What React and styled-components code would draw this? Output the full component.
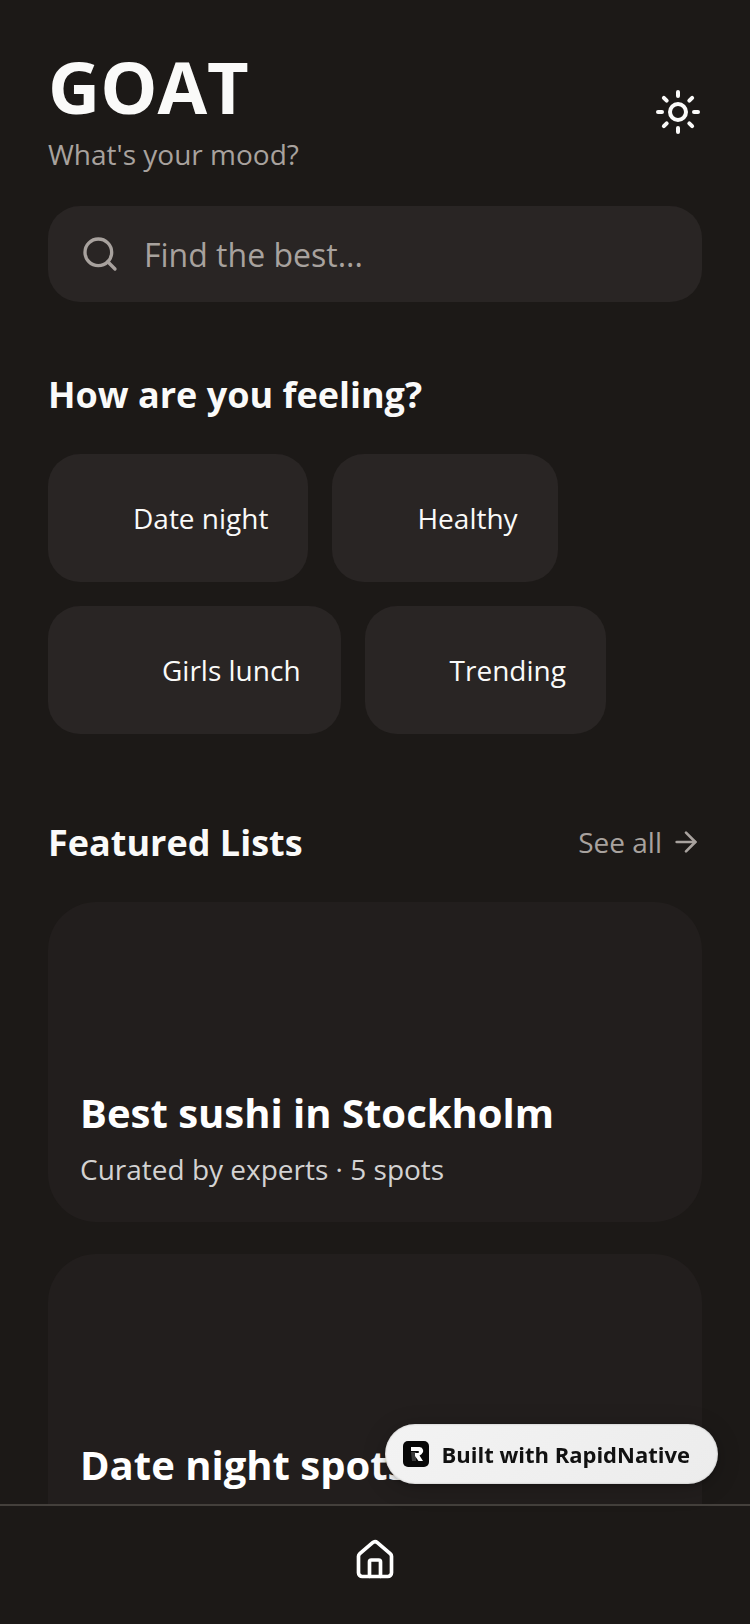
import React, { useState } from "react";
import styled, { createGlobalStyle } from "styled-components";
import { ArrowRight, House, Search, Sun } from "lucide-react";

const GlobalStyle = createGlobalStyle`
  * {
    box-sizing: border-box;
  }
  body {
    margin: 0;
    background-color: #1c1917;
    font-family: "Open Sans", "Noto Sans", sans-serif;
  }
  button, input {
    font-family: inherit;
    border: none;
    padding: 0;
  }
`;

const Screen = styled.div`
  display: flex;
  flex-direction: column;
  height: 100vh;
  background-color: #1c1917;
  color: #fafaf9;
`;

const Content = styled.main`
  flex: 1;
  min-height: 0;
  overflow: hidden;
  padding: 50px 48px 0;
`;

const Header = styled.header`
  display: flex;
  justify-content: space-between;
  align-items: center;
  margin-bottom: 32px;
`;

const Title = styled.h1`
  margin: 0 0 12px;
  font-size: 72px;
  line-height: 72px;
  font-weight: 700;
`;

const Subtitle = styled.p`
  margin: 0;
  font-size: 28px;
  line-height: 40px;
  color: #a8a29e;
`;

const ThemeButton = styled.button`
  display: flex;
  background: none;
  color: #fafaf9;
  cursor: pointer;
`;

const SearchBar = styled.label`
  display: flex;
  align-items: center;
  gap: 24px;
  height: 96px;
  padding: 0 32px;
  border-radius: 32px;
  background-color: #292524;
  color: #a8a29e;
`;

const SearchInput = styled.input`
  flex: 1;
  min-width: 0;
  height: 48px;
  background: none;
  outline: none;
  font-size: 32px;
  color: #fafaf9;

  &::placeholder {
    color: #a8a29e;
    opacity: 1;
  }
`;

const Section = styled.section`
  padding-top: ${(props) => props.$space};
`;

const SectionHead = styled.div`
  display: flex;
  justify-content: space-between;
  align-items: center;
  margin-bottom: 32px;
`;

const SectionTitle = styled.h2`
  margin: 0;
  padding-top: 2px;
  font-size: 36px;
  line-height: 54px;
  font-weight: 700;
`;

const SeeAll = styled.a`
  display: flex;
  align-items: center;
  gap: 8px;
  font-size: 28px;
  line-height: 40px;
  color: #a8a29e;
  text-decoration: none;
`;

const Moods = styled.div`
  display: flex;
  flex-wrap: wrap;
  gap: 24px;
`;

const Mood = styled.button`
  display: flex;
  align-items: center;
  gap: 16px;
  padding: 40px;
  border-radius: 32px;
  background-color: #292524;
  color: #fafaf9;
  font-size: 28px;
  line-height: 48px;
  cursor: pointer;
`;

const MoodIcon = styled.span`
  width: ${(props) => (props.$wide ? "58px" : "29px")};
`;

const Cards = styled.div`
  display: flex;
  flex-direction: column;
  gap: 32px;
`;

const Card = styled.article`
  display: flex;
  flex-direction: column;
  justify-content: flex-end;
  gap: 8px;
  height: 320px;
  padding: 33px 32px;
  border-radius: 48px;
  background-color: #221e1d;
`;

const CardTitle = styled.h3`
  margin: 0;
  font-size: 40px;
  line-height: 56px;
  font-weight: 700;
  color: #ffffff;
`;

const CardText = styled.p`
  margin: 0;
  font-size: 28px;
  line-height: 40px;
  color: #d3d2d2;
`;

const TabBar = styled.nav`
  display: flex;
  justify-content: center;
  padding: 32px 0 42px;
  border-top: 2px solid #44403c;
`;

const Tab = styled.a`
  display: flex;
  color: #ffffff;
`;

const Badge = styled.a`
  position: fixed;
  right: 32px;
  bottom: 140px;
  display: flex;
  align-items: center;
  gap: 12px;
  height: 60px;
  padding: 0 28px 0 18px;
  border-radius: 30px;
  background: linear-gradient(135deg, #f3f3f3, #ececec);
  box-shadow: inset 0 0 2px rgba(0, 0, 0, 0.3), 0 2px 4px rgba(0, 0, 0, 0.2),
    0 4px 24px rgba(0, 0, 0, 0.2);
  color: #111111;
  font-size: 22px;
  line-height: 32px;
  font-weight: 700;
  text-decoration: none;
`;

const moods = [
  { name: "Date night" },
  { name: "Healthy" },
  { name: "Girls lunch", wide: true },
  { name: "Trending" },
];

const lists = [
  { title: "Best sushi in Stockholm", text: "Curated by experts · 5 spots" },
  { title: "Date night spots", text: "Curated by experts · 5 spots" },
];

const BadgeLogo = () => (
  <svg width="26" height="26" viewBox="0 0 26 26" aria-hidden="true">
    <rect width="26" height="26" rx="5" fill="#080808" />
    <path d="M8 11h5v9H9z" fill="#3c3c3c" />
    <path
      d="M8 6h8.500a4 4 0 0 1 2 7.300L16.500 14.500L20 20h-4.500L12 15V12h3a1 1 0 0 0 0-2H8z"
      fill="#ffffff"
    />
  </svg>
);

const App = () => {
  const [query, setQuery] = useState("");

  return (
    <Screen>
      <GlobalStyle />
      <Content>
        <Header>
          <div>
            <Title>GOAT</Title>
            <Subtitle>What's your mood?</Subtitle>
          </div>
          <ThemeButton type="button" aria-label="Toggle theme">
            <Sun size={48} />
          </ThemeButton>
        </Header>
        <SearchBar>
          <Search size={40} />
          <SearchInput
            type="text"
            aria-label="Search"
            placeholder="Find the best..."
            value={query}
            onChange={(e) => setQuery(e.target.value)}
          />
        </SearchBar>

        <Section $space="64px">
          <SectionHead>
            <SectionTitle>How are you feeling?</SectionTitle>
          </SectionHead>
          <Moods>
            {moods.map((mood) => (
              <Mood key={mood.name} type="button">
                <MoodIcon $wide={mood.wide} />
                {mood.name}
              </Mood>
            ))}
          </Moods>
        </Section>

        <Section $space="80px">
          <SectionHead>
            <SectionTitle>Featured Lists</SectionTitle>
            <SeeAll href="#lists">
              See all
              <ArrowRight size={32} />
            </SeeAll>
          </SectionHead>
          <Cards>
            {lists.map((list) => (
              <Card key={list.title}>
                <CardTitle>{list.title}</CardTitle>
                <CardText>{list.text}</CardText>
              </Card>
            ))}
          </Cards>
        </Section>
      </Content>
      <TabBar>
        <Tab href="#home" aria-label="Home">
          <House size={44} />
        </Tab>
      </TabBar>
      <Badge href="#rapidnative">
        <BadgeLogo />
        Built with RapidNative
      </Badge>
    </Screen>
  );
};
export default App;
